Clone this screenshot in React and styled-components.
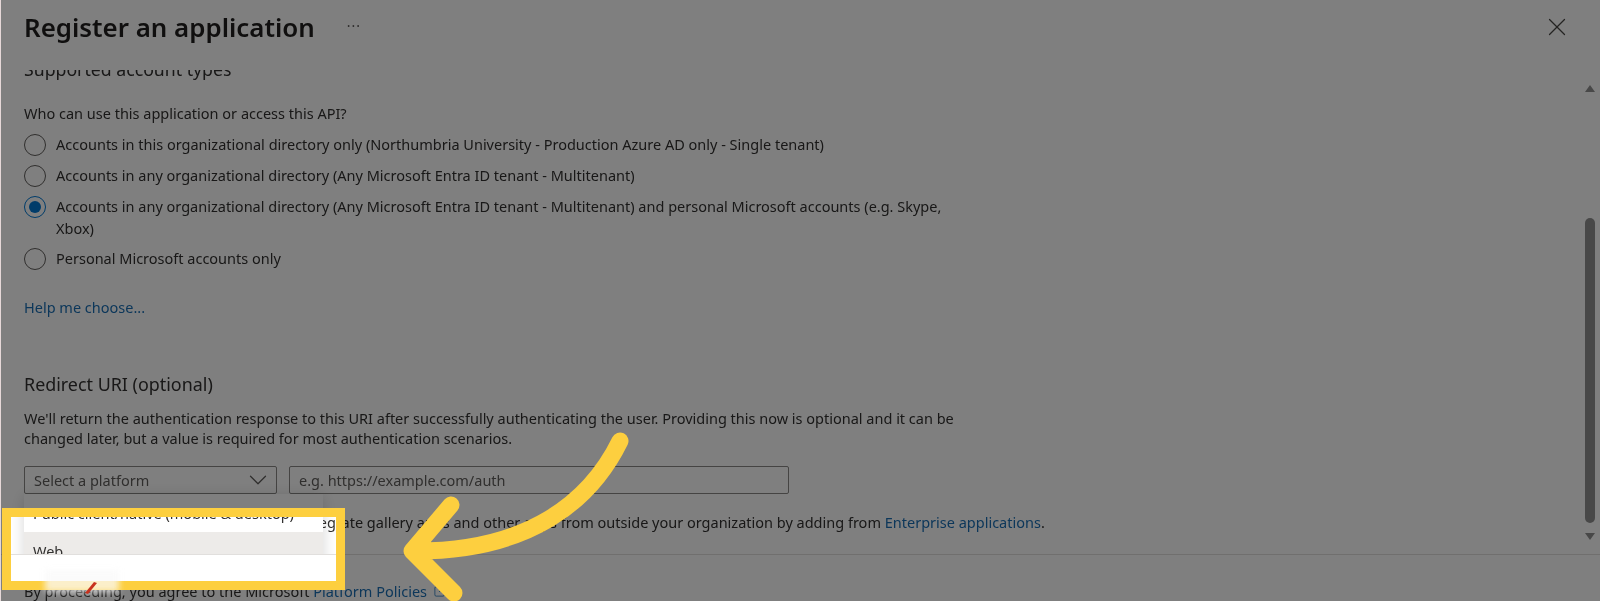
import React from 'react';
import styled, { createGlobalStyle } from 'styled-components';
import { X, ChevronDown, ExternalLink } from 'lucide-react';

const Global = createGlobalStyle`
  html, body {
    margin: 0;
    padding: 0;
    background: #fff;
  }
  * {
    box-sizing: border-box;
  }
`;

const Page = styled.div`
  position: relative;
  width: 1600px;
  height: 601px;
  overflow: hidden;
  display: flex;
  flex-direction: column;
  background: #fff;
  border-left: 1px solid #e6d8d8;
  color: #323130;
  font-family: 'Noto Sans', 'Open Sans', sans-serif;
  font-size: 14.5px;
  filter: blur(0.35px);
`;

const Header = styled.header`
  height: 70px;
  flex: none;
  display: flex;
  align-items: flex-start;
  padding: 8px 28px 0 23px;
`;

const Title = styled.h1`
  margin: 0;
  font-size: 25.9px;
  line-height: 38px;
  font-weight: 600;
  color: #201f1e;
`;

const More = styled.span`
  margin: 0 0 0 32px;
  font-size: 14px;
  line-height: 36px;
  letter-spacing: 1px;
  color: #605e5c;
`;

const Close = styled.span`
  margin-left: auto;
  display: flex;
  height: 38px;
  align-items: center;
  color: #484644;
`;

const Middle = styled.div`
  flex: 1;
  min-height: 0;
  display: flex;
`;

const Scroll = styled.main`
  flex: 1;
  min-width: 0;
  overflow: hidden;
  padding-left: 23px;
`;

const Clipped = styled.h2`
  margin: -13px 0 22px;
  font-size: 17.7px;
  line-height: 24px;
  font-weight: 400;
`;

const Question = styled.p`
  margin: 0 0 11px;
  line-height: 20px;
`;

const Options = styled.div`
  display: flex;
  flex-direction: column;
  gap: 9px;
  width: 930px;
`;

const Option = styled.label`
  display: flex;
  gap: 10px;
  line-height: 21.5px;
`;

const Radio = styled.span`
  flex: none;
  width: 22px;
  height: 22px;
  border-radius: 50%;
  border: 1.5px solid ${(p) => (p.$checked ? '#0078d4' : '#605e5c')};
  display: flex;
  align-items: center;
  justify-content: center;
  &::after {
    content: '';
    display: ${(p) => (p.$checked ? 'block' : 'none')};
    width: 12px;
    height: 12px;
    border-radius: 50%;
    background: #0078d4;
  }
`;

const Link = styled.a`
  color: #1a6fb5;
  text-decoration: none;
`;

const Help = styled.p`
  margin: 27px 0 55px;
  line-height: 20px;
`;

const SectionTitle = styled.h2`
  margin: 0 0 12px;
  font-size: 17.9px;
  line-height: 24px;
  font-weight: 400;
`;

const Desc = styled.p`
  margin: 0 0 18px;
  width: 940px;
  line-height: 20px;
`;

const FieldRow = styled.div`
  display: flex;
  gap: 12px;
`;

const SelectWrap = styled.div`
  position: relative;
  width: 253px;
`;

const Select = styled.div`
  height: 28px;
  border: 1px solid #8a8886;
  border-radius: 2px;
  display: flex;
  align-items: center;
  justify-content: space-between;
  padding: 0 3px 0 9px;
  color: #605e5c;
`;

const Input = styled.div`
  width: 500px;
  height: 28px;
  border: 1px solid #8a8886;
  border-radius: 2px;
  display: flex;
  align-items: center;
  padding: 0 9px;
  color: #605e5c;
`;

const Menu = styled.ul`
  position: absolute;
  z-index: 2;
  top: 28px;
  left: 0;
  width: 299px;
  margin: 0;
  padding: 0;
  list-style: none;
  background: #fff;
  box-shadow: 0 2px 14px rgba(0, 0, 0, 0.16);
`;

const MenuItem = styled.li`
  height: 38px;
  padding: 0 9px;
  display: flex;
  align-items: center;
  white-space: nowrap;
  background: ${(p) => (p.$active ? '#edebe9' : '#fff')};
`;

const Note = styled.p`
  margin: 18px 0 0;
  line-height: 20px;
  white-space: nowrap;
`;

const ScrollBar = styled.div`
  flex: none;
  width: 18px;
  display: flex;
  flex-direction: column;
  align-items: center;
  margin-right: 1px;
`;

const Arrow = styled.span`
  width: 0;
  height: 0;
  margin-top: ${(p) => p.$top}px;
  border-left: 5.5px solid transparent;
  border-right: 5.5px solid transparent;
  ${(p) => (p.$down ? 'border-top' : 'border-bottom')}: 7px solid #909090;
`;

const Thumb = styled.div`
  width: 10px;
  height: 305px;
  margin-top: 126px;
  border-radius: 5px;
  background: #909090;
`;

const Footer = styled.footer`
  flex: none;
  height: 47px;
  border-top: 1px solid #e1dfdd;
  padding: 25px 0 0 23px;
  display: flex;
  align-items: center;
  line-height: 20px;
  white-space: nowrap;
`;

const Spotlight = styled.div`
  position: absolute;
  z-index: 3;
  left: 1px;
  top: 508px;
  width: 343px;
  height: 82px;
  border: 9px solid #fdcf3f;
  box-shadow: 0 0 0 2000px rgba(0, 0, 0, 0.5);
`;

const Smudge = styled.div`
  position: absolute;
  z-index: 4;
  left: 44px;
  top: 570px;
  width: 74px;
  height: 22px;
  background: rgba(250, 250, 250, 0.75);
  filter: blur(3px);
`;

const Pointer = styled.svg`
  position: absolute;
  z-index: 5;
  left: 80px;
  top: 581px;
`;

const Callout = styled.svg`
  position: absolute;
  z-index: 5;
  left: 0;
  top: 0;
`;

const accounts = [
  'Accounts in this organizational directory only (Northumbria University - Production Azure AD only - Single tenant)',
  'Accounts in any organizational directory (Any Microsoft Entra ID tenant - Multitenant)',
  'Accounts in any organizational directory (Any Microsoft Entra ID tenant - Multitenant) and personal Microsoft accounts (e.g. Skype, Xbox)',
  'Personal Microsoft accounts only',
];

const App = () => {
  return (
    <Page>
      <Global />
      <Header>
        <Title>Register an application</Title>
        <More>···</More>
        <Close>
          <X size={30} strokeWidth={1} />
        </Close>
      </Header>
      <Middle>
        <Scroll>
          <Clipped>Supported account types</Clipped>
          <Question>Who can use this application or access this API?</Question>
          <Options>
            {accounts.map((text, i) => (
              <Option key={text}>
                <Radio $checked={i === 2} />
                <span>{text}</span>
              </Option>
            ))}
          </Options>
          <Help>
            <Link href="#">Help me choose...</Link>
          </Help>
          <SectionTitle>Redirect URI (optional)</SectionTitle>
          <Desc>
            We'll return the authentication response to this URI after successfully authenticating the
            user. Providing this now is optional and it can be changed later, but a value is required
            for most authentication scenarios.
          </Desc>
          <FieldRow>
            <SelectWrap>
              <Select>
                Select a platform
                <ChevronDown size={30} strokeWidth={1} />
              </Select>
              <Menu>
                <MenuItem>Public client/native (mobile &amp; desktop)</MenuItem>
                <MenuItem $active>Web</MenuItem>
                <MenuItem>Single-page application (SPA)</MenuItem>
              </Menu>
            </SelectWrap>
            <Input>e.g. https://example.com/auth</Input>
          </FieldRow>
          <Note>
            Register an app you're working on here. Integrate gallery apps and other apps from outside
            your organization by adding from <Link href="#">Enterprise applications</Link>.
          </Note>
        </Scroll>
        <ScrollBar>
          <Arrow $top={15} />
          <Thumb />
          <Arrow $down $top={10} />
        </ScrollBar>
      </Middle>
      <Footer>
        By proceeding, you agree to the Microsoft&nbsp;
        <Link href="#">Platform Policies</Link>
        <ExternalLink size={15} strokeWidth={1.2} color="#1a6fb5" style={{ marginLeft: 6 }} />
      </Footer>
      <Spotlight />
      <Smudge />
      <Pointer width="20" height="16" viewBox="0 0 20 16">
        <path d="M13 1 L16 2 L7 13 L4 12 Z" fill="#c8321e" />
      </Pointer>
      <Callout width="1600" height="601" viewBox="0 0 1600 601" fill="none">
        <path
          d="M619 441 C 590 500, 530 552, 411 551 M450 505 L 411 551 L 453 593"
          stroke="#fdcf3f"
          strokeWidth="17"
          strokeLinecap="round"
          strokeLinejoin="round"
        />
      </Callout>
    </Page>
  );
};

export default App;
